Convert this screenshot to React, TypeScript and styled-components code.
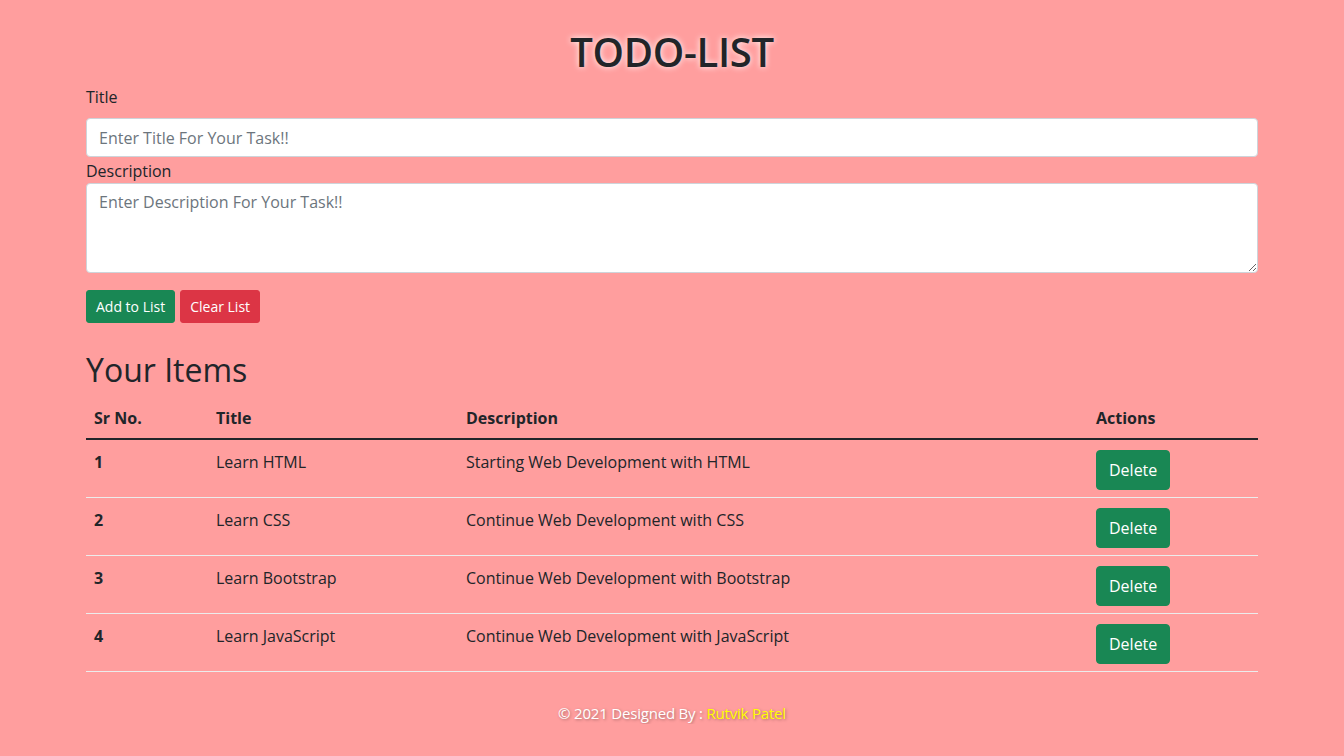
import React, { useState } from "react";
import styled, { createGlobalStyle } from "styled-components";

const GlobalStyle = createGlobalStyle`
  * { box-sizing: border-box; }
  body {
    margin: 0;
    background: #ff9e9e;
    color: #212529;
    font-family: "Open Sans", "Noto Sans", sans-serif;
    font-size: 16px;
    line-height: 1.5;
  }
`;

const Page = styled.div`
  width: 1172px;
  margin: 0 auto;
  padding-top: 28px;
`;

const Heading = styled.h1`
  margin: 0 0 9px 0;
  text-align: center;
  font-size: 40px;
  font-weight: 600;
  line-height: 1.2;
  letter-spacing: -0.3px;
  text-shadow: 0 0 6px #fff;
`;

const Label = styled.label<{ $gap: number }>`
  display: block;
  font-size: 16px;
  line-height: 24px;
  margin-bottom: ${(p) => p.$gap}px;
`;

const Field = styled.div`
  margin-bottom: 2px;
`;

const TextInput = styled.input`
  display: block;
  width: 100%;
  height: 39px;
  padding: 6px 12px;
  font: inherit;
  border: 1px solid #ced4da;
  border-radius: 4px;
  background: #fff;
  color: #212529;
  outline: none;
  &::placeholder { color: #6c757d; }
`;

const TextArea = styled.textarea`
  display: block;
  width: 100%;
  height: 90px;
  padding: 6px 12px;
  font: inherit;
  border: 1px solid #ced4da;
  border-radius: 4px;
  background: #fff;
  color: #212529;
  outline: none;
  resize: vertical;
  &::placeholder { color: #6c757d; }
`;

const ButtonRow = styled.div`
  display: flex;
  gap: 5px;
  margin-top: 17px;
`;

const Button = styled.button<{ $variant: "success" | "danger"; $size?: "sm" | "md" }>`
  font-family: inherit;
  font-size: ${(p) => (p.$size === "sm" ? "14px" : "16px")};
  line-height: ${(p) => (p.$size === "sm" ? "21px" : "24px")};
  padding: ${(p) => (p.$size === "sm" ? "5px 9px" : "7px 12px")};
  color: #fff;
  border: 1px solid ${(p) => (p.$variant === "success" ? "#198754" : "#dc3545")};
  background: ${(p) => (p.$variant === "success" ? "#198754" : "#dc3545")};
  border-radius: ${(p) => (p.$size === "sm" ? "3px" : "4px")};
  cursor: pointer;
`;

const SubHeading = styled.h2`
  margin: 28px 0 9px 0;
  font-size: 32px;
  font-weight: 500;
  line-height: 1.2;
`;

const Table = styled.table`
  width: 100%;
  border-collapse: collapse;
`;

const Th = styled.th<{ $w: number }>`
  width: ${(p) => p.$w}px;
  text-align: left;
  font-weight: 700;
  padding: 8px 8px 8px 8px;
  border-bottom: 2px solid #212529;
`;

const Td = styled.td<{ $bold?: boolean }>`
  padding: 10px 8px 6px 8px;
  vertical-align: top;
  font-weight: ${(p) => (p.$bold ? 700 : 400)};
  border-bottom: 1px solid #ececec;
  height: 58px;
`;

const Footer = styled.footer`
  margin-top: 30px;
  text-align: center;
  color: #fff;
  font-size: 15px;
  letter-spacing: -0.2px;
  text-shadow: 1px 1px 3px rgba(0, 0, 0, 0.35);
`;

const Name = styled.span`
  color: #ffff00;
`;

type Item = { title: string; desc: string };

const INITIAL: Item[] = [
  { title: "Learn HTML", desc: "Starting Web Development with HTML" },
  { title: "Learn CSS", desc: "Continue Web Development with CSS" },
  { title: "Learn Bootstrap", desc: "Continue Web Development with Bootstrap" },
  { title: "Learn JavaScript", desc: "Continue Web Development with JavaScript" },
];

export default function App() {
  const [items, setItems] = useState<Item[]>(INITIAL);
  const [title, setTitle] = useState("");
  const [desc, setDesc] = useState("");

  const add = () => {
    if (!title.trim()) return;
    setItems([...items, { title, desc }]);
    setTitle("");
    setDesc("");
  };

  return (
    <>
      <GlobalStyle />
      <Page>
        <Heading>TODO-LIST</Heading>
        <Field>
          <Label htmlFor="title" $gap={9}>Title</Label>
          <TextInput
            id="title"
            placeholder="Enter Title For Your Task!!"
            value={title}
            onChange={(e) => setTitle(e.target.value)}
          />
        </Field>
        <Field>
          <Label htmlFor="desc" $gap={0}>Description</Label>
          <TextArea
            id="desc"
            placeholder="Enter Description For Your Task!!"
            value={desc}
            onChange={(e) => setDesc(e.target.value)}
          />
        </Field>
        <ButtonRow>
          <Button $variant="success" $size="sm" onClick={add}>Add to List</Button>
          <Button $variant="danger" $size="sm" onClick={() => setItems([])}>Clear List</Button>
        </ButtonRow>

        <SubHeading>Your Items</SubHeading>
        <Table>
          <thead>
            <tr>
              <Th $w={122}>Sr No.</Th>
              <Th $w={250}>Title</Th>
              <Th $w={630}>Description</Th>
              <Th $w={170}>Actions</Th>
            </tr>
          </thead>
          <tbody>
            {items.map((it, i) => (
              <tr key={i}>
                <Td $bold>{i + 1}</Td>
                <Td>{it.title}</Td>
                <Td>{it.desc}</Td>
                <Td>
                  <Button $variant="success" onClick={() => setItems(items.filter((_, j) => j !== i))}>
                    Delete
                  </Button>
                </Td>
              </tr>
            ))}
          </tbody>
        </Table>
        <Footer>
          © 2021 Designed By : <Name>Rutvik Patel</Name>
        </Footer>
      </Page>
    </>
  );
}
